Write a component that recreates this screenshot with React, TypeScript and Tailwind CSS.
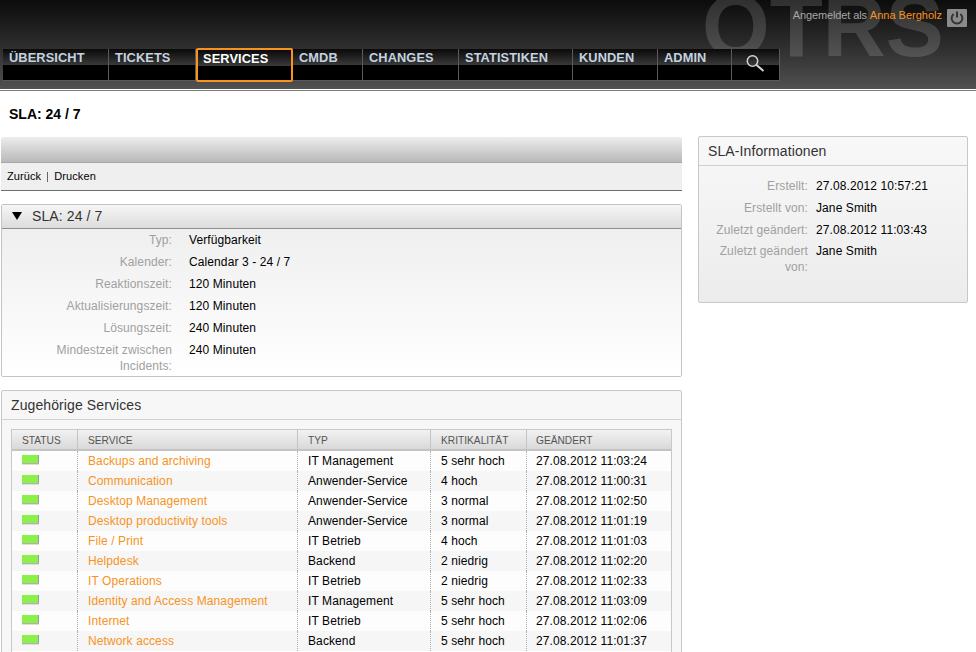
import React from "react";

const nav = [
  ["ÜBERSICHT", "w-[106px]"],
  ["TICKETS", "w-[87px]"],
  ["SERVICES", "w-[97px]"],
  ["CMDB", "w-[70px]"],
  ["CHANGES", "w-[96px]"],
  ["STATISTIKEN", "w-[114px]"],
  ["KUNDEN", "w-[85px]"],
  ["ADMIN", "w-[74px]"],
];

const rows = [
  ["Backups and archiving", "IT Management", "5 sehr hoch", "27.08.2012 11:03:24"],
  ["Communication", "Anwender-Service", "4 hoch", "27.08.2012 11:00:31"],
  ["Desktop Management", "Anwender-Service", "3 normal", "27.08.2012 11:02:50"],
  ["Desktop productivity tools", "Anwender-Service", "3 normal", "27.08.2012 11:01:19"],
  ["File / Print", "IT Betrieb", "4 hoch", "27.08.2012 11:01:03"],
  ["Helpdesk", "Backend", "2 niedrig", "27.08.2012 11:02:20"],
  ["IT Operations", "IT Betrieb", "2 niedrig", "27.08.2012 11:02:33"],
  ["Identity and Access Management", "IT Management", "5 sehr hoch", "27.08.2012 11:03:09"],
  ["Internet", "IT Betrieb", "5 sehr hoch", "27.08.2012 11:02:06"],
  ["Network access", "Backend", "5 sehr hoch", "27.08.2012 11:01:37"],
];

const slaFields = [
  ["Typ:", "Verfügbarkeit"],
  ["Kalender:", "Calendar 3 - 24 / 7"],
  ["Reaktionszeit:", "120 Minuten"],
  ["Aktualisierungszeit:", "120 Minuten"],
  ["Lösungszeit:", "240 Minuten"],
  ["Mindestzeit zwischen Incidents:", "240 Minuten"],
];

const infoFields = [
  ["Erstellt:", "27.08.2012 10:57:21"],
  ["Erstellt von:", "Jane Smith"],
  ["Zuletzt geändert:", "27.08.2012 11:03:43"],
  ["Zuletzt geändert von:", "Jane Smith"],
];

function NavItem({ label, width, active }: { label: string; width: string; active: boolean }) {
  return (
    <div
      className={`relative shrink-0 bg-black ${width} ${
        active ? "z-10 -my-[1px] h-[34px] rounded-[2px] border-2 border-[#f7931e]" : "h-[32px] border-r border-b border-[#5a5a5a]"
      }`}
    >
      <div className={`h-[16px] bg-gradient-to-b from-[#0a0a0a] to-[#3a3a3a] ${active ? "pl-[5px]" : "pl-[6px]"}`}>
        <span className={`block text-[12.8px] font-bold leading-[18px] ${active ? "text-white" : "text-[#c5d3e0]"}`}>{label}</span>
      </div>
    </div>
  );
}

export default function App() {
  return (
    <div className="h-screen overflow-hidden bg-white font-['Liberation_Sans',Arial,sans-serif] text-[12px] tracking-[0.1px] text-black">
      <header className="relative h-[89px] overflow-hidden bg-gradient-to-b from-[#0c0c0c] to-[#515151]">
        <div className="absolute left-[702px] top-[-34px] text-[87px] font-bold leading-[120px] tracking-normal text-[#ffffff]/15">OTRS</div>
        <div className="absolute right-[9px] top-[9px] flex items-start gap-[5px]">
          <span className="text-[11px] leading-[13px] tracking-normal text-[#a6a6a6]">
            <span className="tracking-[-0.12px]">Angemeldet als </span>
            <span className="text-[#f7931e]">Anna Bergholz</span>
          </span>
          <div className="flex h-[18px] w-[20px] items-center justify-center rounded-[1px] bg-[#8a8a8a]">
            <svg viewBox="0 0 16 16" className="h-[16px] w-[16px]" fill="none" stroke="#333333" strokeWidth="2">
              <path d="M4.6 4a5.4 5.4 0 1 0 6.8 0" />
              <path d="M8 1.5v6" />
            </svg>
          </div>
        </div>
        <nav className="relative ml-[3px] flex pt-[49px]">
          {nav.map(([label, width]) => (
            <NavItem key={label} label={label} width={width} active={label === "SERVICES"} />
          ))}
          <div className="relative h-[32px] w-[48px] shrink-0 border-r border-b border-[#5a5a5a] bg-black">
            <div className="h-[16px] bg-gradient-to-b from-[#0a0a0a] to-[#3a3a3a]" />
            <svg viewBox="0 0 20 20" className="absolute left-[13px] top-[4px] h-[20px] w-[20px]" fill="none">
              <circle cx="7.5" cy="8" r="5.2" stroke="#d4d4d4" strokeWidth="1.5" />
              <path d="M11.5 12l7 6" stroke="#d4d4d4" strokeWidth="2" />
            </svg>
          </div>
        </nav>
      </header>
      <div className="h-[2px] border-b border-[#7a7a7a] bg-white" />

      <h1 className="h-[45px] pl-[9px] pt-[14px] text-[14px] font-bold leading-[18px] tracking-normal">SLA: 24 / 7</h1>

      <main className="flex items-start gap-[16px] pl-[1px] pr-[8px]">
        <div className="flex w-[681px] shrink-0 flex-col gap-[13px] pt-[1px]">
          <div>
            <div className="h-[26px] rounded-t-[2px] border-b border-[#a6a6a6] bg-gradient-to-b from-[#ededed] to-[#b9b9b9]" />
            <div className="flex h-[28px] items-center border-b border-[#6e6e6e] bg-[#efefef] pl-[6px] text-[11px]">
              <span>Zurück</span>
              <span className="mx-[6px] h-[10px] w-px bg-[#666]" />
              <span>Drucken</span>
            </div>
          </div>

          <section className="h-[173px] rounded-[2px] border border-[#c4c4c4]">
            <div className="flex h-[24px] items-center border-b border-[#8f8f8f] bg-gradient-to-b from-[#f6f6f6] to-[#dcdcdc] pb-[1px] pl-[10px] text-[14px] leading-none text-[#333]">
              <span className="mr-[10px] h-0 w-0 border-x-[5.5px] border-t-[8px] border-x-transparent border-t-black" />
              SLA: 24 / 7
            </div>
            <div className="bg-gradient-to-b from-[#efefef] to-white">
              {slaFields.map(([label, value]) => (
                <div key={label} className="flex min-h-[22px] pt-[3px] leading-[16px]">
                  <div className="ml-[50px] w-[120px] text-right text-[#a0a0a0]">{label}</div>
                  <div className="ml-[17px]">{value}</div>
                </div>
              ))}
            </div>
          </section>

          <section className="rounded-[2px] border border-[#c8c8c8] bg-[#f7f7f7] pb-[10px]">
            <div className="flex h-[29px] items-center border-b border-[#d0d0d0] pl-[9px] text-[14px] text-[#333]">Zugehörige Services</div>
            <div className="mx-[9px] mt-[9px] border border-[#c8c8c8] bg-white">
              <table className="w-full table-fixed border-separate border-spacing-0 text-left">
                <colgroup>
                  <col className="w-[66px]" />
                  <col className="w-[220px]" />
                  <col className="w-[133px]" />
                  <col className="w-[96px]" />
                  <col />
                </colgroup>
                <thead>
                  <tr className="h-[21px] text-[10.2px] font-normal text-[#555]">
                    {["STATUS", "SERVICE", "TYP", "KRITIKALITÄT", "GEÄNDERT"].map((h, i) => (
                      <th
                        key={h}
                        className={`border-b-2 border-[#c4c4c4] bg-gradient-to-b from-[#f2f2f2] to-[#d9d9d9] pt-[3px] font-normal tracking-normal ${
                          i < 4 ? "border-r border-r-[#c4c4c4] pl-[10px]" : "pl-[9px]"
                        }`}
                      >
                        {h}
                      </th>
                    ))}
                  </tr>
                </thead>
                <tbody>
                  {rows.map((r, i) => (
                    <tr key={r[0]} className={`h-[20px] ${i % 2 === 0 ? "bg-[#fdfdfd]" : "bg-[#f6f6f6]"}`}>
                      <td className="border-r border-dotted border-r-[#b0b0b0] pl-[10px]">
                        <div className="mb-[4px] h-[8px] w-[16px] bg-[#8cf04a] shadow-[1px_0_0_#9a9a9a,0_1px_0_#b0b0b0,1px_1px_0_#b0b0b0,0_2px_0_#dddddd,1px_2px_0_#dddddd]" />
                      </td>
                      <td className="border-r border-dotted border-r-[#b0b0b0] pl-[10px] text-[#f7931e]">{r[0]}</td>
                      <td className="border-r border-dotted border-r-[#b0b0b0] pl-[10px]">{r[1]}</td>
                      <td className="border-r border-dotted border-r-[#b0b0b0] pl-[10px]">{r[2]}</td>
                      <td className="pl-[9px]">{r[3]}</td>
                    </tr>
                  ))}
                  <tr className="h-[20px]">
                    <td colSpan={5} />
                  </tr>
                </tbody>
              </table>
            </div>
          </section>
        </div>

        <aside className="h-[167px] w-[270px] rounded-[2px] border border-[#c8c8c8] bg-gradient-to-b from-[#f8f8f8] to-[#ececec]">
          <div className="flex h-[29px] items-center border-b border-[#d0d0d0] pl-[9px] text-[14px] text-[#333]">SLA-Informationen</div>
          <div className="flex flex-col pt-[9px]">
            {infoFields.map(([label, value], i) => (
              <div key={label} className={`flex min-h-[22px] pt-[3px] leading-[16px] ${i === 3 ? "-mt-[1px]" : ""}`}>
                <div className="w-[109px] text-right text-[#a0a0a0]">{label}</div>
                <div className="ml-[8px]">{value}</div>
              </div>
            ))}
          </div>
        </aside>
      </main>
    </div>
  );
}
